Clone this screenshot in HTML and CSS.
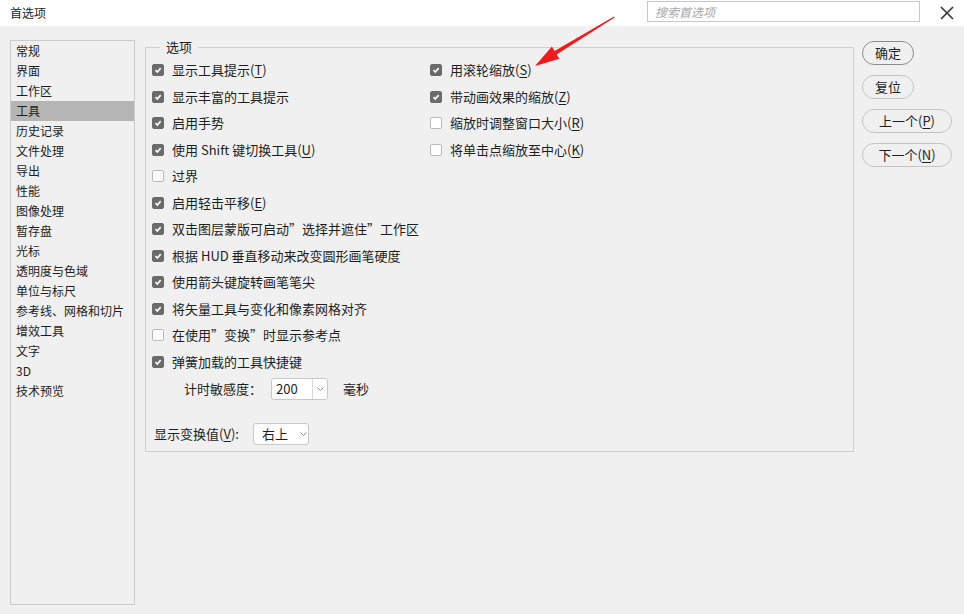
FILE: index.html
```html
<!DOCTYPE html>
<html lang="zh-CN">
<head>
    <meta charset="UTF-8">
    <title>首选项</title>
    <link rel="stylesheet" href="styles.css">
</head>
<body>
    <div class="titlebar">
        <span class="title">首选项</span>
        <div class="search">搜索首选项</div>
        <svg class="close" width="14" height="14" viewBox="0 0 14 14">
            <path d="M1 1 L13 13 M13 1 L1 13" stroke="#333" stroke-width="1.6" fill="none"/>
        </svg>
    </div>

    <div class="main">
        <ul class="nav">
            <li>常规</li>
            <li>界面</li>
            <li>工作区</li>
            <li class="active">工具</li>
            <li>历史记录</li>
            <li>文件处理</li>
            <li>导出</li>
            <li>性能</li>
            <li>图像处理</li>
            <li>暂存盘</li>
            <li>光标</li>
            <li>透明度与色域</li>
            <li>单位与标尺</li>
            <li>参考线、网格和切片</li>
            <li>增效工具</li>
            <li>文字</li>
            <li>3D</li>
            <li>技术预览</li>
        </ul>

        <fieldset class="group">
            <legend>选项</legend>
            <div class="cols">
                <div class="col col-left">
                    <div class="row"><span class="box on"><svg viewBox="0 0 12 12"><path d="M3 6.2 L5.2 8.4 L9.2 3.8"/></svg></span><span>显示工具提示(<u>T</u>)</span></div>
                    <div class="row"><span class="box on"><svg viewBox="0 0 12 12"><path d="M3 6.2 L5.2 8.4 L9.2 3.8"/></svg></span><span>显示丰富的工具提示</span></div>
                    <div class="row"><span class="box on"><svg viewBox="0 0 12 12"><path d="M3 6.2 L5.2 8.4 L9.2 3.8"/></svg></span><span>启用手势</span></div>
                    <div class="row"><span class="box on"><svg viewBox="0 0 12 12"><path d="M3 6.2 L5.2 8.4 L9.2 3.8"/></svg></span><span>使用 Shift 键切换工具(<u>U</u>)</span></div>
                    <div class="row"><span class="box"></span><span>过界</span></div>
                    <div class="row"><span class="box on"><svg viewBox="0 0 12 12"><path d="M3 6.2 L5.2 8.4 L9.2 3.8"/></svg></span><span>启用轻击平移(<u>E</u>)</span></div>
                    <div class="row"><span class="box on"><svg viewBox="0 0 12 12"><path d="M3 6.2 L5.2 8.4 L9.2 3.8"/></svg></span><span>双击图层蒙版可启动”选择并遮住”工作区</span></div>
                    <div class="row"><span class="box on"><svg viewBox="0 0 12 12"><path d="M3 6.2 L5.2 8.4 L9.2 3.8"/></svg></span><span>根据 HUD 垂直移动来改变圆形画笔硬度</span></div>
                    <div class="row"><span class="box on"><svg viewBox="0 0 12 12"><path d="M3 6.2 L5.2 8.4 L9.2 3.8"/></svg></span><span>使用箭头键旋转画笔笔尖</span></div>
                    <div class="row"><span class="box on"><svg viewBox="0 0 12 12"><path d="M3 6.2 L5.2 8.4 L9.2 3.8"/></svg></span><span>将矢量工具与变化和像素网格对齐</span></div>
                    <div class="row"><span class="box"></span><span>在使用”变换”时显示参考点</span></div>
                    <div class="row"><span class="box on"><svg viewBox="0 0 12 12"><path d="M3 6.2 L5.2 8.4 L9.2 3.8"/></svg></span><span>弹簧加载的工具快捷键</span></div>
                    <div class="timing">
                        <span class="timing-label">计时敏感度：</span>
                        <div class="select select-split">
                            <span class="select-value">200</span>
                            <span class="select-btn"><svg width="7" height="4" viewBox="0 0 7 4"><path d="M0.5 0.5 L3.5 3.5 L6.5 0.5"/></svg></span>
                        </div>
                        <span class="unit">毫秒</span>
                    </div>
                </div>
                <div class="col">
                    <div class="row"><span class="box on"><svg viewBox="0 0 12 12"><path d="M3 6.2 L5.2 8.4 L9.2 3.8"/></svg></span><span>用滚轮缩放(<u>S</u>)</span></div>
                    <div class="row"><span class="box on"><svg viewBox="0 0 12 12"><path d="M3 6.2 L5.2 8.4 L9.2 3.8"/></svg></span><span>带动画效果的缩放(<u>Z</u>)</span></div>
                    <div class="row"><span class="box"></span><span>缩放时调整窗口大小(<u>R</u>)</span></div>
                    <div class="row"><span class="box"></span><span>将单击点缩放至中心(<u>K</u>)</span></div>
                </div>
            </div>
            <div class="transform-row">
                <span class="transform-label">显示变换值(<u>V</u>):</span>
                <div class="select select-plain">
                    <span class="select-value">右上</span>
                    <svg width="7" height="4" viewBox="0 0 7 4"><path d="M0.5 0.5 L3.5 3.5 L6.5 0.5"/></svg>
                </div>
            </div>
        </fieldset>

        <div class="buttons">
            <button class="btn btn-default">确定</button>
            <button class="btn">复位</button>
            <button class="btn btn-wide">上一个(<u>P</u>)</button>
            <button class="btn btn-wide">下一个(<u>N</u>)</button>
        </div>
    </div>

    <!-- annotation arrow -->
    <svg class="arrow" width="964" height="614" viewBox="0 0 964 614">
        <polygon points="614,16.5 614.6,17.6 556.6,54.4 559.5,58.8 535,66 551.9,46.5 554.6,51" fill="#f01c1c"/>
    </svg>
</body>
</html>
```

FILE: styles.css
```css
* {
    box-sizing: border-box;
}
body {
    margin: 0;
    width: 964px;
    height: 614px;
    overflow: hidden;
    background-color: #f0f0f0;
    color: #1e1e1e;
    font-family: "Noto Sans CJK SC", "Microsoft YaHei", sans-serif;
    font-size: 13px;
    line-height: 18px;
    position: relative;
}
u {
    text-decoration-thickness: 1px;
    text-underline-offset: 2px;
}
.titlebar {
    height: 26px;
    background-color: #fff;
    display: flex;
    align-items: center;
    padding: 0 10px;
}
.title {
    font-size: 12px;
}
.search {
    margin-left: auto;
    align-self: flex-start;
    margin-top: 1px;
    width: 273px;
    height: 21px;
    border: 1px solid #c8c8c8;
    padding-left: 7px;
    font-size: 12px;
    line-height: 19px;
    font-style: italic;
    color: #a8a8a8;
}
.close {
    margin-left: 20px;
}
.main {
    display: flex;
    align-items: flex-start;
    padding: 12px 0 0 10px;
}
.nav {
    list-style: none;
    margin: 2px 0 0 0;
    padding: 0;
    width: 125px;
    height: 565px;
    border: 1px solid #cbcbcb;
    font-size: 12px;
}
.nav li {
    height: 20px;
    line-height: 20px;
    padding-left: 5px;
}
.nav li.active {
    background-color: #b5b5b5;
}
.group {
    margin: 0 0 0 10px;
    width: 709px;
    padding: 1px 6px 6px 6px;
    border: 1px solid #d0d0d0;
    min-width: 0;
}
.group legend {
    margin-left: 8px;
    padding: 0 6px;
    line-height: 18px;
}
.cols {
    display: flex;
}
.col-left {
    width: 278px;
}
.row {
    height: 26.5px;
    display: flex;
    align-items: center;
    gap: 8px;
    white-space: nowrap;
}
.box {
    width: 12px;
    height: 12px;
    flex: none;
    border-radius: 2px;
    background-color: #fff;
    border: 1px solid #b9b9b9;
}
.box.on {
    background-color: #6b6b6b;
    border-color: #6b6b6b;
}
.box svg {
    display: block;
    width: 10px;
    height: 10px;
}
.box svg path {
    fill: none;
    stroke: #fff;
    stroke-width: 2;
}
.timing {
    margin-top: 3px;
    padding-left: 32px;
    display: flex;
    align-items: center;
    height: 22px;
}
.timing-label {
    width: 87px;
}
.unit {
    margin-left: 15px;
}
.select {
    height: 22px;
    background-color: #fff;
    border: 1px solid #c8c8c8;
    border-radius: 3px;
    display: flex;
    align-items: center;
}
.select svg path {
    fill: none;
    stroke: #8a8a8a;
    stroke-width: 1;
}
.select-split {
    width: 57px;
}
.select-split .select-value {
    width: 40px;
    padding-left: 4px;
}
.select-btn {
    flex: 1;
    height: 100%;
    border-left: 1px solid #d8d8d8;
    display: flex;
    align-items: center;
    justify-content: center;
}
.transform-label {
    width: 99px;
}
.select-plain {
    width: 56px;
    padding-left: 8px;
}
.select-plain .select-value {
    width: 38px;
}
.transform-row {
    margin-top: 23px;
    padding-left: 2px;
    height: 22px;
    display: flex;
    align-items: center;
}
.buttons {
    margin: 3px 0 0 8px;
    display: flex;
    flex-direction: column;
    align-items: flex-start;
    gap: 10px;
}
.btn {
    width: 52px;
    height: 24px;
    padding: 0;
    border: 1px solid #c4c4c4;
    border-radius: 12px;
    background-color: #f0f0f0;
    font-family: inherit;
    font-size: 13px;
    color: #1e1e1e;
    line-height: 18px;
}
.btn-default {
    border-color: #8c8c8c;
}
.btn-wide {
    width: 90px;
}
.arrow {
    position: absolute;
    top: 0;
    left: 0;
    pointer-events: none;
}
```
